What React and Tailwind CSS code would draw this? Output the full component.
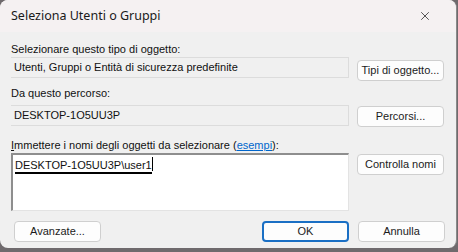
import { X } from "lucide-react";

function Btn({ children, className = "", primary = false }) {
  return (
    <button
      className={
        "h-[21px] w-[87px] shrink-0 rounded-[4px] bg-[#fdfdfd] text-[11px] text-[#1b1b1b] " +
        (primary
          ? "border-2 border-[#1a6fc4] "
          : "border border-[#cfcfcf] ") +
        className
      }
    >
      {children}
    </button>
  );
}

export default function App() {
  return (
    <div className="h-[252px] w-[458px] bg-[#6f6a6d] font-['Liberation_Sans',Arial,sans-serif]">
      <div className="flex h-[248px] w-[457px] flex-col overflow-hidden rounded-[8px] border-r border-[#8a8a8a] bg-[#f0f0f0]">
        {/* title bar */}
        <div className="flex h-[32px] shrink-0 items-center justify-between bg-[#f5f1f2] pl-[11px] pr-[24px]">
          <span className="font-['Noto_Sans',sans-serif] text-[12.5px] text-[#1a1a1a]">
            Seleziona Utenti o Gruppi
          </span>
          <X size={14} strokeWidth={1.3} className="text-[#222]" />
        </div>

        <div className="flex flex-1 flex-col px-[11px] pt-[10px] text-[11px] text-[#111]">
          <div className="leading-[15px]">Selezionare questo tipo di oggetto:</div>
          <div className="flex h-[21px] items-start gap-[8px]">
            <div className="flex h-[21px] w-[338px] items-center border-b border-r border-t border-[#dcdcdc] pl-[3px]">
              Utenti, Gruppi o Entità di sicurezza predefinite
            </div>
            <Btn className="mt-[3px]">Tipi di oggetto...</Btn>
          </div>

          <div className="mt-[8px] leading-[15px]">Da questo percorso:</div>
          <div className="mt-[4px] flex h-[21px] items-start gap-[8px]">
            <div className="flex h-[21px] w-[338px] items-center border-b border-r border-t border-[#dcdcdc] pl-[3px]">
              DESKTOP-1O5UU3P
            </div>
            <Btn className="mt-[1px]">Percorsi...</Btn>
          </div>

          <div className="mt-[12px] leading-[15px]">
            <span className="underline">I</span>mmettere i nomi degli oggetti da selezionare (
            <span className="text-[#0066cc] underline">esempi</span>):
          </div>
          <div className="flex h-[58px] items-start gap-[8px]">
            <div className="h-[58px] w-[338px] border-l-2 border-t-2 border-[#8e8e8e] border-b border-r border-b-[#e3e3e3] border-r-[#e3e3e3] bg-white pl-[2px] pt-[2px]">
              <span className="inline-block border-b-2 border-black leading-[14px]">
                DESKTOP-1O5UU3P\user1
              </span>
              <span className="inline-block h-[14px] w-px bg-black align-top"></span>
            </div>
            <Btn className="mt-[1px]">Controlla nomi</Btn>
          </div>

          <div className="mt-[10px] flex items-center">
            <Btn className="ml-[3px] w-[86px]">Avanzate...</Btn>
            <div className="flex-1" />
            <Btn primary className="w-[72px]">OK</Btn>
            <Btn className="ml-[9px] w-[72px]">Annulla</Btn>
          </div>
        </div>
      </div>
    </div>
  );
}
